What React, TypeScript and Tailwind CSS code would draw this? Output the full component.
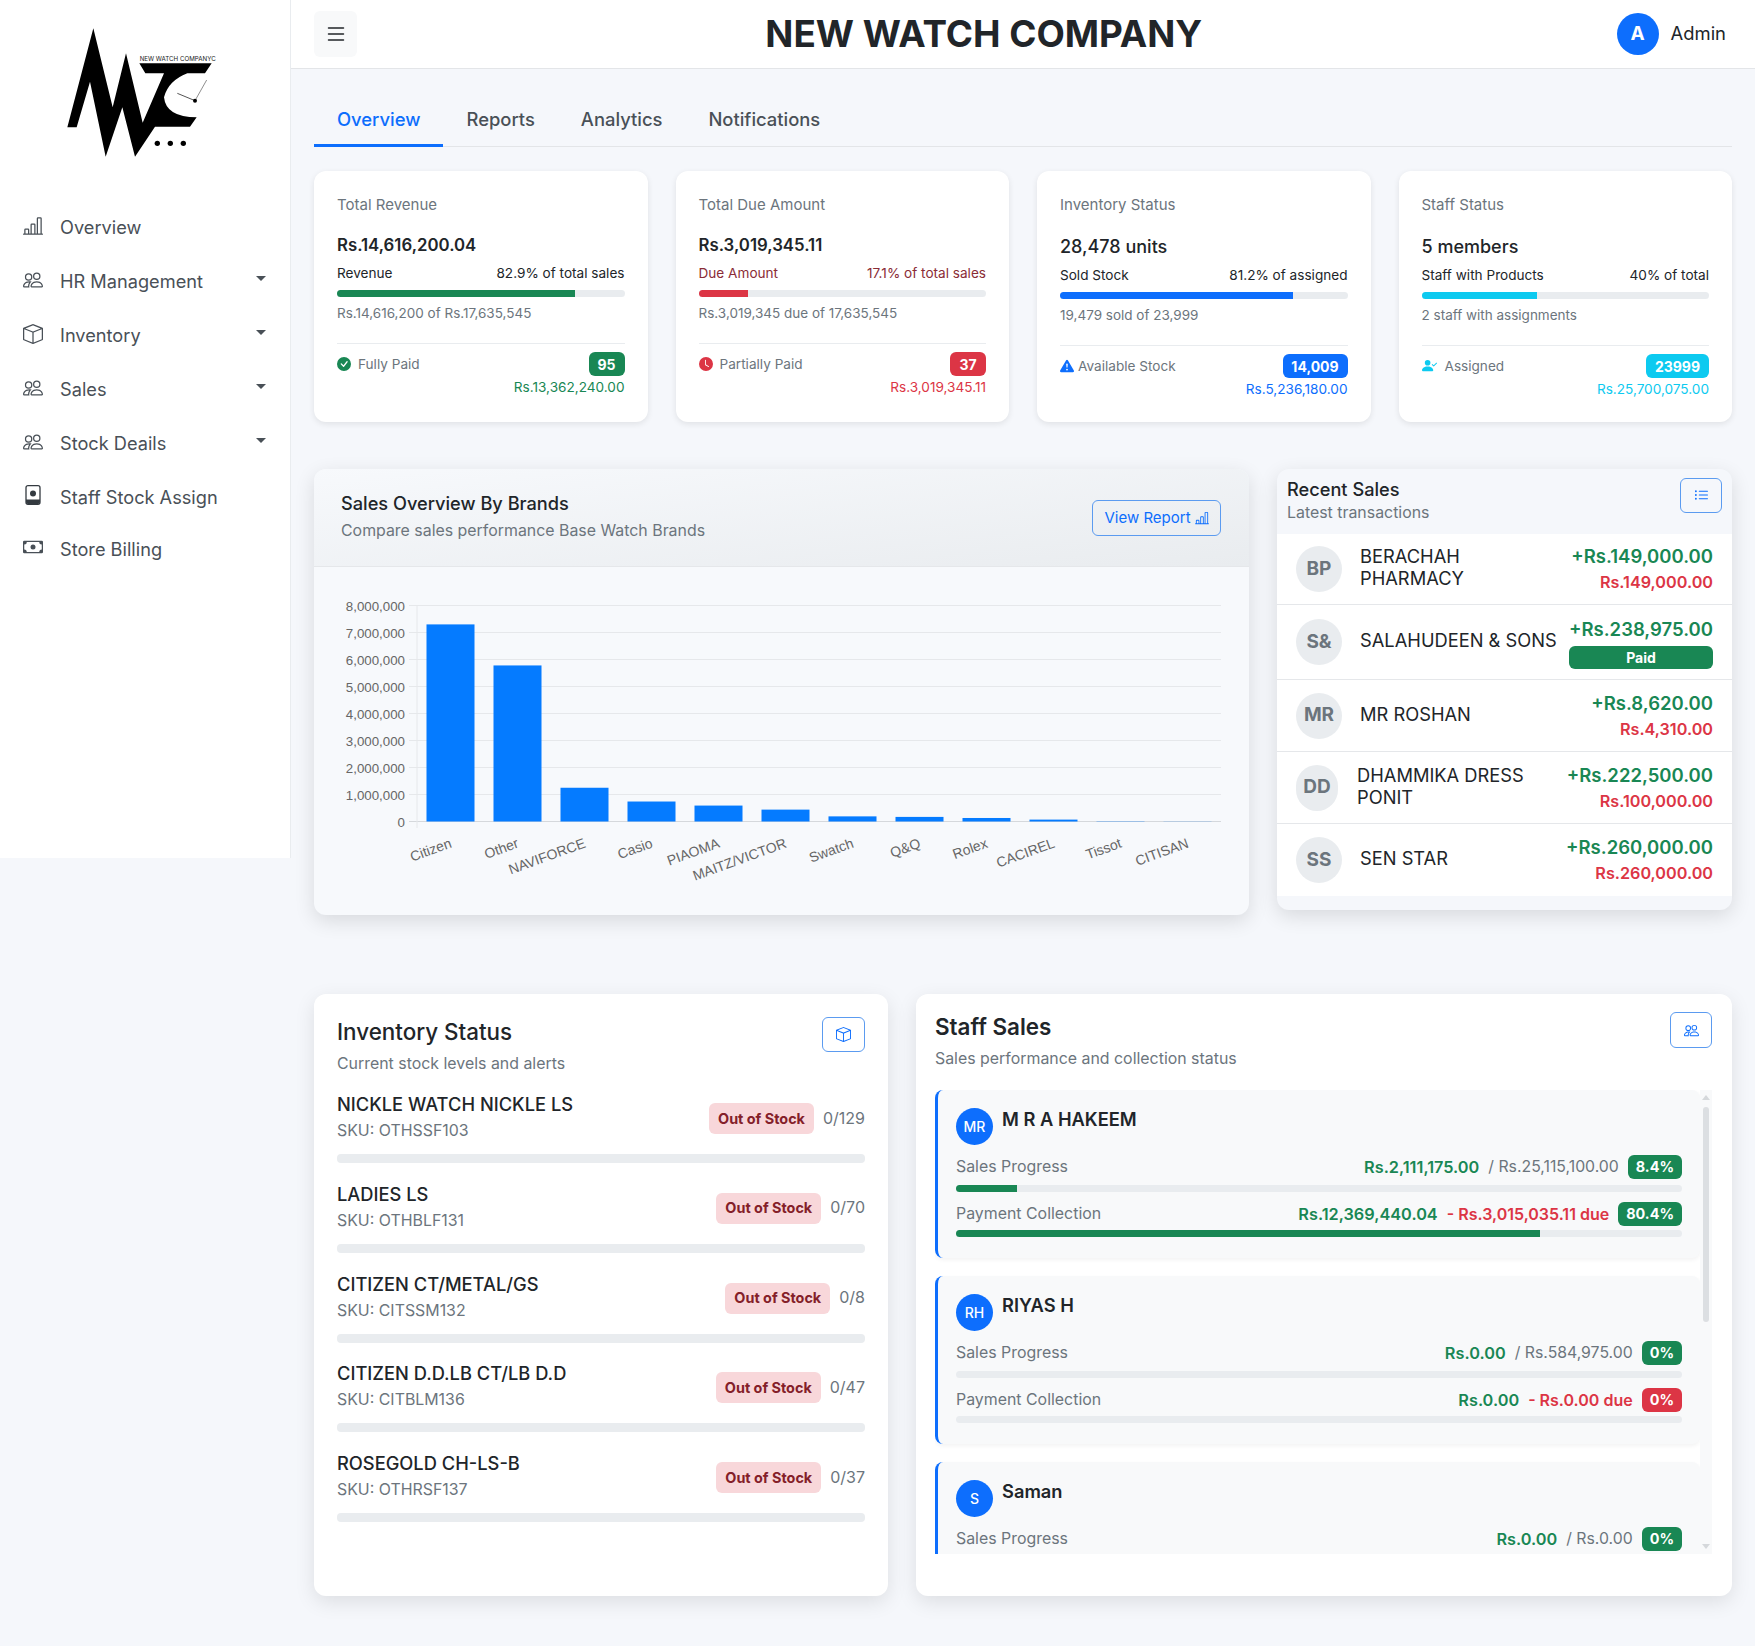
import { ReactNode } from "react";
import {
    BsBarChartLine,
    BsBox,
    BsCash,
    BsCheckCircleFill,
    BsClockFill,
    BsExclamationTriangleFill,
    BsList,
    BsListUl,
    BsPeople,
    BsPersonCheckFill,
} from "react-icons/bs";

function StaffBadgeIcon() {
    return (
        <svg width="20" height="20" viewBox="0 0 20 20">
            <rect x="3" y="0.7" width="14" height="18.6" rx="2" fill="none" stroke="#343a40" strokeWidth="1.3" />
            <path d="M3 14.5h14V17a2 2 0 0 1-2 2H5a2 2 0 0 1-2-2z" fill="#343a40" />
            <circle cx="10" cy="8.5" r="3" fill="#343a40" />
        </svg>
    );
}

function Logo() {
    return (
        <svg width="200" height="160" viewBox="0 0 600 480">
            <path
                d="M82 352 L160 55 L218 292 L258 130 L308 338 L372 190 L316 190 L298 160 L515 160 L495 190 L442 190 Q385 212 372 262 Q378 322 470 322 L450 350 L345 350 L285 440 L247 292 L197 440 L150 215 L110 352 Z"
                fill="#000"
            />
            <text x="299" y="153" fontSize="19" fill="#222" textLength="228" lengthAdjust="spacingAndGlyphs">
                NEW WATCH COMPANYC
            </text>
            <line x1="465" y1="272" x2="500" y2="210" stroke="#555" strokeWidth="2" />
            <line x1="465" y1="272" x2="412" y2="250" stroke="#555" strokeWidth="3" />
            <circle cx="465" cy="272" r="6" fill="#000" />
            <circle cx="352" cy="400" r="8" fill="#000" />
            <circle cx="391" cy="400" r="8" fill="#000" />
            <circle cx="430" cy="400" r="8" fill="#000" />
        </svg>
    );
}

const navItems: { label: string; icon: ReactNode; caret?: boolean; last?: boolean }[] = [
    { label: "Overview", icon: <BsBarChartLine size={20} /> },
    { label: "HR Management", icon: <BsPeople size={20} />, caret: true },
    { label: "Inventory", icon: <BsBox size={20} />, caret: true },
    { label: "Sales", icon: <BsPeople size={20} />, caret: true },
    { label: "Stock Deails", icon: <BsPeople size={20} />, caret: true },
    { label: "Staff Stock Assign", icon: <StaffBadgeIcon /> },
    { label: "Store Billing", icon: <BsCash size={20} />, last: true },
];

function Sidebar() {
    return (
        <aside className="w-[291px] h-[858px] shrink-0 bg-white border-r border-[#e9ecef]">
            <div className="ml-10 mt-[10px]">
                <Logo />
            </div>
            <nav className="mt-[31px]">
                {navItems.map((item) => (
                    <div
                        key={item.label}
                        className={`relative flex items-center pl-[23px] gap-[17px] text-[18.2px] text-[#495057] ${item.last ? "h-[50px]" : "h-[53.9px]"}`}
                    >
                        <span className="w-5 flex justify-center text-[#495057] -translate-y-[2px]">{item.icon}</span>
                        <span>{item.label}</span>
                        {item.caret && (
                            <span className="absolute right-[24px] top-[21px] w-0 h-0 border-x-[5px] border-x-transparent border-t-[5px] border-t-[#495057]" />
                        )}
                    </div>
                ))}
            </nav>
        </aside>
    );
}

function Header() {
    return (
        <header className="h-[69px] bg-white border-b border-[#e3e5e8] flex items-center justify-between pl-[23px] pr-[29px]">
            <button className="w-[43px] h-[46px] bg-[#f8f9fa] rounded-md flex items-center justify-center text-[#212529]">
                <BsList size={24} />
            </button>
            <h1 className="mr-[6px] text-[36.8px] font-bold text-[#212529] leading-none">NEW WATCH COMPANY</h1>
            <div className="flex items-center gap-3">
                <div className="w-[42px] h-[42px] rounded-full bg-[#0d6efd] text-white flex items-center justify-center text-[19px] font-bold">A</div>
                <span className="text-[18.4px] text-[#212529]">Admin</span>
            </div>
        </header>
    );
}

function Tabs() {
    const tabs = ["Overview", "Reports", "Analytics", "Notifications"];
    return (
        <div className="flex h-[57px] border-b border-[#e3e5e8]">
            {tabs.map((tab, i) => (
                <div
                    key={tab}
                    className={`px-[23px] pt-[16px] text-[18.4px] font-medium ${i === 0 ? "text-[#0d6efd] border-b-[3px] border-[#0d6efd] h-[57px]" : "text-[#495057]"}`}
                >
                    {tab}
                </div>
            ))}
        </div>
    );
}

type Kpi = {
    title: string;
    value: string;
    big?: boolean;
    label: string;
    right: string;
    labelClass: string;
    percent: number;
    barClass: string;
    sub: string;
    icon: ReactNode;
    status: string;
    count: string;
    badgeClass: string;
    amount: string;
    amountClass: string;
};

const kpis: Kpi[] = [
    {
        title: "Total Revenue",
        value: "Rs.14,616,200.04",
        label: "Revenue",
        right: "82.9% of total sales",
        labelClass: "text-[#212529]",
        percent: 82.9,
        barClass: "bg-[#198754]",
        sub: "Rs.14,616,200 of Rs.17,635,545",
        icon: <BsCheckCircleFill size={14} className="text-[#198754]" />,
        status: "Fully Paid",
        count: "95",
        badgeClass: "bg-[#198754] w-[36px]",
        amount: "Rs.13,362,240.00",
        amountClass: "text-[#198754]",
    },
    {
        title: "Total Due Amount",
        value: "Rs.3,019,345.11",
        label: "Due Amount",
        right: "17.1% of total sales",
        labelClass: "text-[#8a2c36]",
        percent: 17.1,
        barClass: "bg-[#dc3545]",
        sub: "Rs.3,019,345 due of 17,635,545",
        icon: <BsClockFill size={14} className="text-[#dc3545]" />,
        status: "Partially Paid",
        count: "37",
        badgeClass: "bg-[#dc3545] w-[36px]",
        amount: "Rs.3,019,345.11",
        amountClass: "text-[#dc3545]",
    },
    {
        title: "Inventory Status",
        value: "28,478 units",
        big: true,
        label: "Sold Stock",
        right: "81.2% of assigned",
        labelClass: "text-[#212529]",
        percent: 81.2,
        barClass: "bg-[#0d6efd]",
        sub: "19,479 sold of 23,999",
        icon: <BsExclamationTriangleFill size={14} className="text-[#0d6efd] -mr-[3px]" />,
        status: "Available Stock",
        count: "14,009",
        badgeClass: "bg-[#0d6efd] w-[65px]",
        amount: "Rs.5,236,180.00",
        amountClass: "text-[#0d6efd]",
    },
    {
        title: "Staff Status",
        value: "5 members",
        big: true,
        label: "Staff with Products",
        right: "40% of total",
        labelClass: "text-[#212529]",
        percent: 40,
        barClass: "bg-[#0dcaf0]",
        sub: "2 staff with assignments",
        icon: <BsPersonCheckFill size={15} className="text-[#0dcaf0] mr-[1px]" />,
        status: "Assigned",
        count: "23999",
        badgeClass: "bg-[#0dcaf0] w-[63px]",
        amount: "Rs.25,700,075.00",
        amountClass: "text-[#0dcaf0]",
    },
];

function KpiCard({ kpi }: { kpi: Kpi }) {
    return (
        <div className="h-[251px] bg-white rounded-xl shadow-[0_2px_6px_rgba(0,0,0,0.09)] pl-[23px] pr-[23px] pt-[23px]">
            <div className="text-[15px] leading-[22px] text-[#6c757d]">{kpi.title}</div>
            <div
                className={
                    kpi.big
                        ? "mt-[16px] mb-[3px] text-[18px] leading-[30px] font-medium text-[#212529]"
                        : "mt-[16px] mb-[5px] text-[16.8px] leading-[26px] font-semibold text-[#212529]"
                }
            >
                {kpi.value}
            </div>
            <div className={`flex justify-between text-[13.6px] leading-5 ${kpi.labelClass}`}>
                <span>{kpi.label}</span>
                <span>{kpi.right}</span>
            </div>
            <div className="mt-[7px] h-[7px] rounded bg-[#e9ecef] overflow-hidden">
                <div className={`h-full ${kpi.barClass}`} style={{ width: `${kpi.percent}%` }} />
            </div>
            <div className="mt-[6px] text-[13.5px] leading-5 text-[#6c757d]">{kpi.sub}</div>
            <div className="mt-5 border-t border-[#e9ecef] pt-[8px]">
                <div className="flex items-center justify-between h-[24px]">
                    <span className="flex items-center gap-[7px] text-[13.6px] text-[#6c757d]">
                        {kpi.icon}
                        {kpi.status}
                    </span>
                    <span className={`h-[24px] rounded-md flex items-center justify-center text-white text-[14px] font-bold ${kpi.badgeClass}`}>
                        {kpi.count}
                    </span>
                </div>
                <div className={`mt-[1px] text-right text-[13.6px] leading-5 ${kpi.amountClass}`}>{kpi.amount}</div>
            </div>
        </div>
    );
}

const bars = [
    ["Citizen", 7.3],
    ["Other", 5.78],
    ["NAVIFORCE", 1.25],
    ["Casio", 0.74],
    ["PIAOMA", 0.59],
    ["MAITZ/VICTOR", 0.44],
    ["Swatch", 0.19],
    ["Q&Q", 0.17],
    ["Rolex", 0.13],
    ["CACIREL", 0.07],
    ["Tissot", 0.01],
    ["CITISAN", 0.005],
] as const;

function BarChart() {
    const zero = 821.5;
    const step = 27;
    return (
        <svg width="935" height="348" viewBox="314 567 935 348" fontFamily="'Liberation Sans', sans-serif" fontSize="13.3">
            {[0, 1, 2, 3, 4, 5, 6, 7, 8].map((v) => (
                <g key={v}>
                    <line x1="409" x2="1221" y1={zero - v * step} y2={zero - v * step} stroke={v === 0 ? "#d5d8dc" : "#e6e8eb"} strokeWidth="1" />
                    <text x="405" y={zero - v * step + 5} textAnchor="end" fill="#666">
                        {v === 0 ? "0" : `${v},000,000`}
                    </text>
                </g>
            ))}
            <line x1="417" x2="417" y1="606" y2="828" stroke="#e6e8eb" />
            {bars.map(([name, value], i) => {
                const tick = 417 + 67 * i + 33.5;
                const h = value * step;
                return (
                    <g key={name}>
                        <rect x={tick - 24} y={zero - h} width="48" height={h} fill="#057bff" />
                        <text x={tick + 2} y="847" textAnchor="end" fill="#666" fontSize="14" transform={`rotate(-20 ${tick + 2} 847)`}>
                            {name}
                        </text>
                    </g>
                );
            })}
        </svg>
    );
}

function OutlineButton({ children, className }: { children: ReactNode; className: string }) {
    return (
        <button className={`shrink-0 flex items-center justify-center border border-[#5b9bf0] rounded-md text-[#0d6efd] ${className}`}>
            {children}
        </button>
    );
}

function SalesChartCard() {
    return (
        <div className="w-[935px] h-[446px] rounded-xl overflow-hidden bg-[#f7f9fc] shadow-[0_6px_20px_rgba(0,0,0,0.12)]">
            <div className="h-[98px] bg-linear-to-br from-[#f7f9fc] to-[#e9ecef] border-b border-[#e5e7ea] flex items-center justify-between pl-[27px] pr-7">
                <div className="-mt-[2px]">
                    <div className="text-[18.2px] leading-7 font-medium text-[#212529]">Sales Overview By Brands</div>
                    <div className="text-[15.9px] leading-7 text-[#6c757d]">Compare sales performance Base Watch Brands</div>
                </div>
                <OutlineButton className="w-[129px] h-[36px] gap-1 text-[15px] mt-[1px]">
                    View Report <BsBarChartLine size={14} />
                </OutlineButton>
            </div>
            <BarChart />
        </div>
    );
}

const recentSales = [
    { initials: "BP", name: "BERACHAH PHARMACY", amount: "+Rs.149,000.00", due: "Rs.149,000.00", h: "h-[71px]", narrow: false },
    { initials: "S&", name: "SALAHUDEEN & SONS", amount: "+Rs.238,975.00", paid: true, h: "h-[75px]", narrow: false },
    { initials: "MR", name: "MR ROSHAN", amount: "+Rs.8,620.00", due: "Rs.4,310.00", h: "h-[72px]", narrow: false },
    { initials: "DD", name: "DHAMMIKA DRESS PONIT", amount: "+Rs.222,500.00", due: "Rs.100,000.00", h: "h-[72px]", narrow: true },
    { initials: "SS", name: "SEN STAR", amount: "+Rs.260,000.00", due: "Rs.260,000.00", h: "h-[72px]", narrow: false },
];

function RecentSalesCard() {
    return (
        <div className="w-[455px] h-[441px] rounded-xl overflow-hidden bg-[#f5f7fb] shadow-[0_6px_20px_rgba(0,0,0,0.12)]">
            <div className="h-[65px] flex justify-between pl-[10px] pr-[10px] pt-[9px]">
                <div>
                    <div className="text-[18.2px] leading-[23px] font-medium text-[#212529]">Recent Sales</div>
                    <div className="text-[15.9px] leading-[23px] text-[#6c757d]">Latest transactions</div>
                </div>
                <OutlineButton className="w-[42px] h-[35px]">
                    <BsListUl size={15} />
                </OutlineButton>
            </div>
            <div className="bg-white">
                {recentSales.map((sale, i) => (
                    <div
                        key={sale.initials}
                        className={`flex items-center pl-[19px] pr-[19px] ${sale.h} ${i < 4 ? "border-b border-[#e5e7ea]" : ""}`}
                    >
                        <div
                            className={`${sale.narrow ? "w-[42px]" : "w-[46px]"} h-[46px] shrink-0 rounded-full bg-[#e9ecef] text-[#6c757d] flex items-center justify-center text-[19px] font-bold`}
                        >
                            {sale.initials}
                        </div>
                        <div className={`${sale.narrow ? "ml-[19px] w-[190px]" : "ml-[18px] w-[200px]"} text-[18.3px] leading-[22px] text-[#212529] -translate-y-[2px]`}>
                            {sale.name}
                        </div>
                        <div className="ml-auto text-right whitespace-nowrap">
                            <div className="mt-[1px] text-[18.5px] leading-[25px] font-semibold text-[#198754]">{sale.amount}</div>
                            {sale.paid ? (
                                <div className="w-[144px] h-[23px] mt-[4px] rounded-md bg-[#198754] text-white text-[14px] font-bold flex items-center justify-center">Paid</div>
                            ) : (
                                <div className="text-[16.2px] leading-[26px] font-semibold text-[#dc3545]">{sale.due}</div>
                            )}
                        </div>
                    </div>
                ))}
            </div>
        </div>
    );
}

const stock = [
    { name: "NICKLE WATCH NICKLE LS", sku: "OTHSSF103", qty: "0/129" },
    { name: "LADIES LS", sku: "OTHBLF131", qty: "0/70" },
    { name: "CITIZEN CT/METAL/GS", sku: "CITSSM132", qty: "0/8" },
    { name: "CITIZEN D.D.LB CT/LB D.D", sku: "CITBLM136", qty: "0/47" },
    { name: "ROSEGOLD CH-LS-B", sku: "OTHRSF137", qty: "0/37" },
];

function InventoryCard() {
    return (
        <div className="w-[574px] h-[602px] bg-white rounded-xl shadow-[0_6px_20px_rgba(0,0,0,0.1)] px-[23px] pt-[23px]">
            <div className="flex justify-between h-[62px]">
                <div>
                    <div className="text-[22.4px] leading-[30px] font-medium text-[#212529]">Inventory Status</div>
                    <div className="mt-[5px] text-[15.9px] leading-6 text-[#6c757d]">Current stock levels and alerts</div>
                </div>
                <OutlineButton className="w-[43px] h-[35px]">
                    <BsBox size={15} />
                </OutlineButton>
            </div>
            <div className="mt-[12px]">
                {stock.map((item) => (
                    <div key={item.sku} className="h-[89.75px]">
                        <div className="flex items-center justify-between">
                            <div>
                                <div className="text-[18.3px] leading-[27px] font-medium text-[#212529]">{item.name}</div>
                                <div className="text-[15.9px] leading-[26px] text-[#6c757d]">SKU: {item.sku}</div>
                            </div>
                            <div className="flex items-center gap-[9px] translate-y-[1px]">
                                <span className="h-[31px] px-[9px] rounded-md bg-[#f8d7da] text-[#842029] text-[14.4px] font-bold flex items-center">Out of Stock</span>
                                <span className="text-[16px] text-[#6c757d] -translate-y-[1px]">{item.qty}</span>
                            </div>
                        </div>
                        <div className="mt-[10px] h-[9px] rounded bg-[#e9ecef]" />
                    </div>
                ))}
            </div>
        </div>
    );
}

const staff = [
    { initials: "MR", name: "M R A HAKEEM", sold: "Rs.2,111,175.00", target: "Rs.25,115,100.00", salesPct: 8.4, paid: "Rs.12,369,440.04", due: "Rs.3,015,035.11", paidPct: 80.4 },
    { initials: "RH", name: "RIYAS H", sold: "Rs.0.00", target: "Rs.584,975.00", salesPct: 0, paid: "Rs.0.00", due: "Rs.0.00", paidPct: 0 },
    { initials: "S", name: "Saman", sold: "Rs.0.00", target: "Rs.0.00", salesPct: 0, paid: "Rs.0.00", due: "Rs.0.00", paidPct: 0 },
];

function StaffRow({ label, children, pct, danger }: { label: string; children: ReactNode; pct: number; danger?: boolean }) {
    return (
        <div className="flex items-center justify-between h-6">
            <span className="text-[15.9px] text-[#6c757d]">{label}</span>
            <div className="flex items-center gap-[9px] whitespace-nowrap">
                {children}
                <span className={`h-6 px-[8px] rounded-md text-white text-[14.4px] font-bold flex items-center ${danger ? "bg-[#dc3545]" : "bg-[#198754]"}`}>{pct}%</span>
            </div>
        </div>
    );
}

function StaffCard() {
    return (
        <div className="w-[816px] h-[602px] bg-white rounded-xl shadow-[0_6px_20px_rgba(0,0,0,0.1)] pl-[19px] pr-5 pt-[18px]">
            <div className="flex justify-between h-[78px]">
                <div>
                    <div className="text-[22.4px] leading-[30px] font-semibold text-[#212529]">Staff Sales</div>
                    <div className="mt-[5px] text-[15.9px] leading-6 text-[#6c757d]">Sales performance and collection status</div>
                </div>
                <OutlineButton className="w-[42px] h-[36px]">
                    <BsPeople size={15} />
                </OutlineButton>
            </div>
            <div className="relative h-[464px] overflow-hidden pr-3 flex flex-col gap-[18px]">
                {staff.map((person) => (
                    <div
                        key={person.initials}
                        className="shrink-0 h-[168px] bg-[#f8f9fa] border-l-[3px] border-[#0d6efd] rounded-lg shadow-[0_2px_4px_rgba(0,0,0,0.05)] pl-[18px] pr-[18px] pt-[18px]"
                    >
                        <div className="flex items-start gap-[9px]">
                            <div className="w-[37px] h-[37px] rounded-full bg-[#0d6efd] text-white flex items-center justify-center text-[14px] font-medium">{person.initials}</div>
                            <div className="text-[18.3px] leading-[22px] font-semibold text-[#212529]">{person.name}</div>
                        </div>
                        <div className="mt-[10px]">
                            <StaffRow label="Sales Progress" pct={person.salesPct}>
                                <span className="text-[16.3px] font-semibold text-[#198754]">{person.sold}</span>
                                <span className="text-[15.8px] text-[#6c757d]">/ {person.target}</span>
                            </StaffRow>
                        </div>
                        <div className="mt-[6px] h-[7px] rounded bg-[#e9ecef] overflow-hidden">
                            <div className="h-full bg-[#198754]" style={{ width: `${person.salesPct}%` }} />
                        </div>
                        <div className="mt-[10px]">
                            <StaffRow label="Payment Collection" pct={person.paidPct} danger={person.paidPct === 0}>
                                <span className="text-[16.3px] font-semibold text-[#198754]">{person.paid}</span>
                                <span className="text-[16px] font-semibold text-[#dc3545]">- {person.due} due</span>
                            </StaffRow>
                        </div>
                        <div className="mt-[4px] h-[7px] rounded bg-[#e9ecef] overflow-hidden">
                            <div className="h-full bg-[#198754]" style={{ width: `${person.paidPct}%` }} />
                        </div>
                    </div>
                ))}
                {/* scrollbar */}
                <div className="absolute top-0 right-0 bottom-0 w-3 bg-[#f8f9fa]">
                    <span className="absolute top-[5px] left-[2px] w-0 h-0 border-x-[4px] border-x-transparent border-b-[5px] border-b-[#d5d8db]" />
                    <div className="absolute top-[17px] left-[3px] w-[6px] h-[215px] rounded-sm bg-[#dcdfe2]" />
                    <span className="absolute bottom-[5px] left-[2px] w-0 h-0 border-x-[4px] border-x-transparent border-t-[5px] border-t-[#d5d8db]" />
                </div>
            </div>
        </div>
    );
}

export default function App() {
    return (
        <div className="flex min-h-[1646px] bg-[#f5f7fb] [font-family:Inter,sans-serif]">
            <Sidebar />
            <main className="flex-1 min-w-0">
                <Header />
                <div className="px-[23px] pt-[21px]">
                    <Tabs />
                    <div className="grid grid-cols-4 gap-[28px] mt-6">
                        {kpis.map((kpi) => (
                            <KpiCard key={kpi.title} kpi={kpi} />
                        ))}
                    </div>
                    <div className="flex items-start gap-7 mt-[47px]">
                        <SalesChartCard />
                        <RecentSalesCard />
                    </div>
                    <div className="flex items-start gap-7 mt-[79px]">
                        <InventoryCard />
                        <StaffCard />
                    </div>
                </div>
            </main>
        </div>
    );
}
